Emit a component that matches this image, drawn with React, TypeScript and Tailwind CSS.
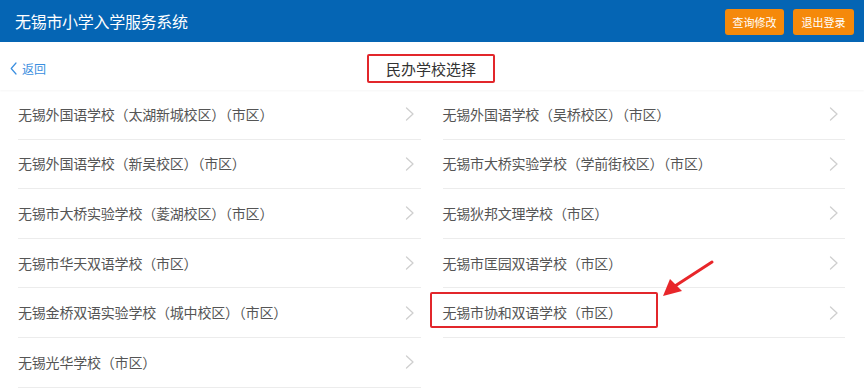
import React from 'react';

const schools: string[] = [
  '无锡外国语学校（太湖新城校区）（市区）',
  '无锡外国语学校（吴桥校区）（市区）',
  '无锡外国语学校（新吴校区）（市区）',
  '无锡市大桥实验学校（学前街校区）（市区）',
  '无锡市大桥实验学校（菱湖校区）（市区）',
  '无锡狄邦文理学校（市区）',
  '无锡市华天双语学校（市区）',
  '无锡市匡园双语学校（市区）',
  '无锡金桥双语实验学校（城中校区）（市区）',
  '无锡市协和双语学校（市区）',
  '无锡光华学校（市区）',
];

const Chevron = () => (
  <svg width="10" height="14" viewBox="0 0 10 14" fill="none" className="shrink-0">
    <path d="M1.5 1 L8 7 L1.5 13" stroke="#cfcfcf" strokeWidth="1.3" strokeLinecap="round" strokeLinejoin="round" />
  </svg>
);

const App: React.FC = () => {
  return (
    <div
      className="relative w-[864px] h-[389px] overflow-hidden bg-white"
      style={{ fontFamily: '"Microsoft YaHei", "Noto Sans CJK SC", "Noto Sans", sans-serif' }}
    >
      {/* Header */}
      <header className="h-[42px] bg-[#0565b4] flex items-center justify-between pl-[15px] pr-[10px]">
        <h1 className="text-white text-[16px] leading-none tracking-[-0.3px]">无锡市小学入学服务系统</h1>
        <div className="flex items-center gap-[9px] pt-[2px]">
          <button className="w-[59px] h-[26px] rounded-[3px] bg-[#f5890a] text-white text-[11px] leading-none">
            查询修改
          </button>
          <button className="w-[61px] h-[26px] rounded-[3px] bg-[#f5890a] text-white text-[11px] leading-none">
            退出登录
          </button>
        </div>
      </header>

      {/* Sub header */}
      <div className="relative h-[48px] flex items-center justify-center pt-[4px] shadow-[0_1px_2px_rgba(0,0,0,0.04)]">
        <button className="absolute left-[10px] top-[20px] flex items-center gap-[5px] text-[#3b8fe0] text-[12px] leading-none">
          <svg width="7" height="13" viewBox="0 0 7 13" fill="none">
            <path d="M6 1 L1.2 6.5 L6 12" stroke="#3b8fe0" strokeWidth="1.2" strokeLinecap="round" strokeLinejoin="round" />
          </svg>
          <span>返回</span>
        </button>
        <div className="ml-[-2px] h-[29px] px-[17px] flex items-center border-2 border-[#e2262b] rounded-[2px] text-[15px] text-[#333] leading-none">
          民办学校选择
        </div>
      </div>

      {/* School list */}
      <div className="grid grid-cols-2 gap-x-[22px] pl-[18px] pr-[19px]">
        {schools.map((name) => (
          <div
            key={name}
            className="h-[49.6px] flex items-center justify-between pr-[6px] border-b border-[#ececec] text-[14px] text-[#555] tracking-[-0.2px]"
          >
            <span>{name}</span>
            <Chevron />
          </div>
        ))}
      </div>

      {/* Annotation: highlight box */}
      <div className="absolute left-[430px] top-[292px] w-[228px] h-[36px] border-2 border-[#e2262b] rounded-[2px] pointer-events-none" />

      {/* Annotation: arrow */}
      <svg className="absolute left-[655px] top-[255px] pointer-events-none" width="65" height="50" viewBox="0 0 65 50">
        <path d="M57 7 L20 31" stroke="#e8262a" strokeWidth="3" strokeLinecap="round" />
        <polygon points="8,41 15,24 27,36" fill="#e8262a" />
      </svg>
    </div>
  );
};

export default App;
